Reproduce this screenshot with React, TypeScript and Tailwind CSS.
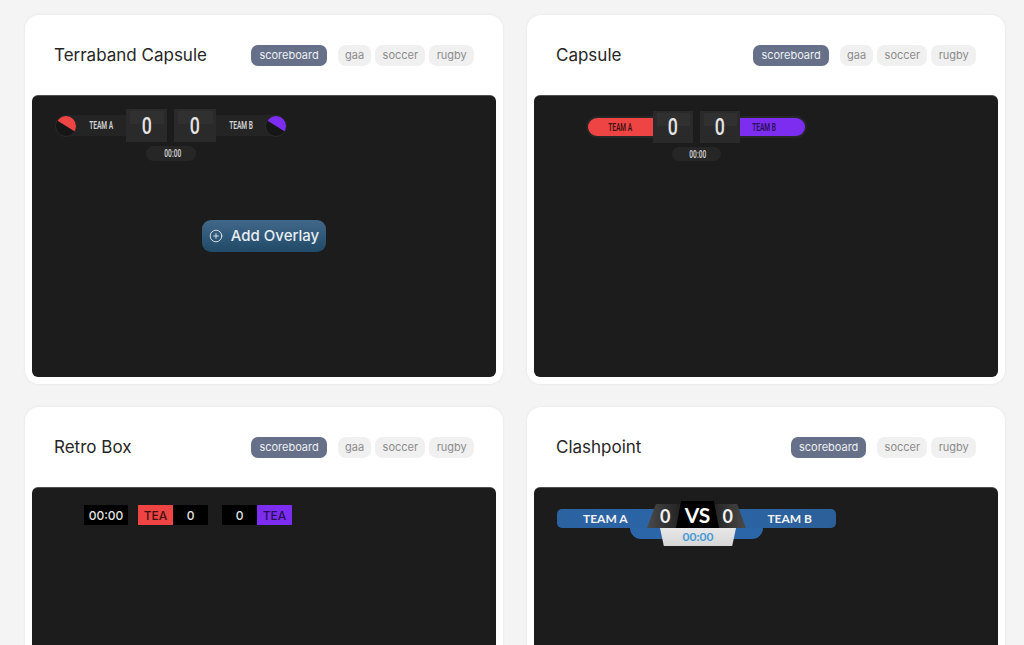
import { CirclePlus } from 'lucide-react';
import type { ReactNode } from 'react';

const inter = "font-['Inter',sans-serif]";
const narrow = "font-['Roboto',sans-serif] font-semibold inline-block scale-x-[0.66] whitespace-nowrap";

function ScoreBox({ width }: { width: string }) {
  return (
    <div className={`relative h-full ${width} shrink-0 bg-[#2a2a2a] flex items-center justify-center`}>
      <div className="absolute left-[4px] right-[3px] top-[2px] h-[13px] bg-[#303030]" />
      <span className="relative font-['Roboto',sans-serif] font-medium text-[24px] leading-none text-[#e5e5e5] inline-block scale-x-[0.74]">
        0
      </span>
    </div>
  );
}

function Pie({ colorClass }: { colorClass: string }) {
  return (
    <div className="relative z-10 w-[22px] h-[22px] shrink-0 rounded-full overflow-hidden bg-[#161616] border border-[#2a2a2a]">
      <div className={`absolute left-[-5px] top-[-5px] w-[30px] h-[15px] origin-bottom rotate-[32deg] ${colorClass}`} />
    </div>
  );
}

function Terraband() {
  return (
    <div className="absolute left-[23px] top-[13px] w-[232px]">
      <div className="flex items-center h-[33px]">
        <Pie colorClass="bg-[#ef4444]" />
        <div className="h-[21px] w-[60px] shrink-0 -ml-[11px] bg-[#242424] flex items-center justify-center pl-[11px] text-[10px] text-[#d4d4d4]">
          <span className={narrow}>TEAM A</span>
        </div>
        <ScoreBox width="w-[41px]" />
        <div className="w-[7px] shrink-0" />
        <ScoreBox width="w-[42px]" />
        <div className="h-[21px] w-[60px] shrink-0 -mr-[11px] bg-[#242424] flex items-center justify-center pr-[9px] text-[10px] text-[#d4d4d4]">
          <span className={narrow}>TEAM B</span>
        </div>
        <Pie colorClass="bg-[#7c2df0]" />
      </div>
      <div className="mt-[4px] mx-auto w-[50px] h-[15px] rounded-full bg-[#262626] flex items-center justify-center pl-[4px] text-[10px] text-[#cfcfcf]">
        <span className={narrow}>00:00</span>
      </div>
    </div>
  );
}

function Capsule() {
  return (
    <div className="absolute left-[52px] top-[15px] w-[221px]">
      <div className="flex items-center h-[32px]">
        <div className="h-[22px] w-[67px] shrink-0 rounded-l-full bg-[#ef4444] border-2 border-r-0 border-[#262626] flex items-center justify-center text-[10px] text-[#3f1212]">
          <span className={narrow}>TEAM A</span>
        </div>
        <ScoreBox width="w-[40px]" />
        <div className="w-[7px] shrink-0" />
        <ScoreBox width="w-[40px]" />
        <div className="h-[22px] w-[67px] shrink-0 rounded-r-full bg-[#7c2df0] border-2 border-l-0 border-[#262626] flex items-center justify-center pr-[16px] text-[10px] text-[#2a0f58]">
          <span className={narrow}>TEAM B</span>
        </div>
      </div>
      <div className="mt-[4px] ml-[86px] w-[49px] h-[14px] rounded-full bg-[#262626] flex items-center justify-center pl-[3px] text-[10px] text-[#cfcfcf]">
        <span className={narrow}>00:00</span>
      </div>
    </div>
  );
}

function RetroBox() {
  return (
    <div className={`absolute left-[52px] top-[17px] flex h-[20px] text-[12px] font-medium ${inter}`}>
      <div className="w-[44px] pt-[1px] bg-black text-[#e5e5e5] flex items-center justify-center">00:00</div>
      <div className="ml-[10px] w-[35px] pt-[1px] bg-[#ef4444] text-[#3f1212] flex items-center justify-center">TEA</div>
      <div className="w-[35px] pt-[1px] bg-black text-[#e5e5e5] flex items-center justify-center">0</div>
      <div className="ml-[14px] w-[35px] pt-[1px] bg-black text-[#e5e5e5] flex items-center justify-center">0</div>
      <div className="w-[35px] pt-[1px] bg-[#7c2df0] text-[#2a0f58] flex items-center justify-center">TEA</div>
    </div>
  );
}

function Clashpoint() {
  return (
    <div className="absolute left-[23px] top-[13px] w-[279px] h-[45px] font-['Lato',sans-serif] font-bold">
      <div className="absolute left-[73px] top-[27px] w-[133px] h-[11px] rounded-b-[14px] bg-[#2b66a8]" />
      <div className="absolute left-0 top-[8px] w-[279px] h-[19px] rounded-[5px] bg-gradient-to-r from-[#2b62a0] via-[#2b66a8] to-[#2b5f99] flex items-center justify-between pl-[26px] pr-[24px] text-[12px] text-[#f2f2f2]">
        <span>TEAM A</span>
        <span>TEAM B</span>
      </div>
      <div className="absolute left-[90px] top-[3px] w-[99px] h-[24px] bg-gradient-to-r from-[#4a4a4a] via-[#111111] to-[#4a4a4a] [clip-path:polygon(9%_0,91%_0,100%_100%,0_100%)] flex items-center justify-between px-[13px] text-[18px] text-[#f2f2f2]">
        <span>0</span>
        <span>0</span>
      </div>
      <div className="absolute left-[119px] top-0 w-[43px] h-[27px] bg-black [clip-path:polygon(12%_0,88%_0,100%_100%,0_100%)] flex items-center justify-center text-[21px] leading-none font-bold text-white">
        VS
      </div>
      <div className="absolute left-[103px] top-[27px] w-[76px] h-[18px] bg-gradient-to-b from-[#e8e8e8] to-[#d6d6d6] [clip-path:polygon(0_0,100%_0,95%_100%,5%_100%)] flex items-center justify-center text-[12px] text-[#4a9ad4]">
        00:00
      </div>
    </div>
  );
}

function Card({ title, tags, children }: { title: string; tags: string[]; children?: ReactNode }) {
  return (
    <div className="h-[369px] rounded-[14px] bg-white shadow-[0_0_3px_rgba(0,0,0,0.08)] px-[7px] pb-[7px] flex flex-col">
      <div className="h-[80px] shrink-0 flex items-center justify-between pl-[22px] pr-[22px]">
        <h3 className={`mt-[1px] text-[17px] text-[#262626] ${inter}`}>{title}</h3>
        <div className="flex items-center gap-[4px]">
          <span className={`mr-[7px] h-[21px] px-[8px] pt-[1px] rounded-[7px] bg-[#667189] text-[#eef0f3] text-[11px] flex items-center ${inter}`}>
            scoreboard
          </span>
          {tags.map((tag) => (
            <span
              key={tag}
              className={`h-[21px] px-[7.25px] pt-[1px] rounded-[8px] bg-[#f0f0f0] text-[#8c8c8c] text-[11px] flex items-center ${inter}`}
            >
              {tag}
            </span>
          ))}
        </div>
      </div>
      <div className="relative flex-1 rounded-[6px] bg-[#1c1c1c] border-t border-[#9a9a9a]/40">{children}</div>
    </div>
  );
}

export default function App() {
  return (
    <div className="h-[645px] w-[1024px] overflow-hidden bg-[#f4f4f4] pt-[15px] pl-[25px] pr-[19px]">
      <div className="grid grid-cols-2 gap-x-[24px] gap-y-[23px]">
        <Card title="Terraband Capsule" tags={['gaa', 'soccer', 'rugby']}>
          <Terraband />
          <div className="absolute inset-0 flex items-center justify-center pb-[2px]">
            <button
              className={`h-[32px] w-[124px] pt-[1px] rounded-[9px] bg-gradient-to-b from-[#41688a] to-[#204a68] flex items-center justify-center gap-[8px] text-[15px] font-medium text-[#e8eef2] ${inter}`}
            >
              <CirclePlus className="w-[14px] h-[14px]" strokeWidth={1.5} />
              Add Overlay
            </button>
          </div>
        </Card>
        <Card title="Capsule" tags={['gaa', 'soccer', 'rugby']}>
          <Capsule />
        </Card>
        <Card title="Retro Box" tags={['gaa', 'soccer', 'rugby']}>
          <RetroBox />
        </Card>
        <Card title="Clashpoint" tags={['soccer', 'rugby']}>
          <Clashpoint />
        </Card>
      </div>
    </div>
  );
}
